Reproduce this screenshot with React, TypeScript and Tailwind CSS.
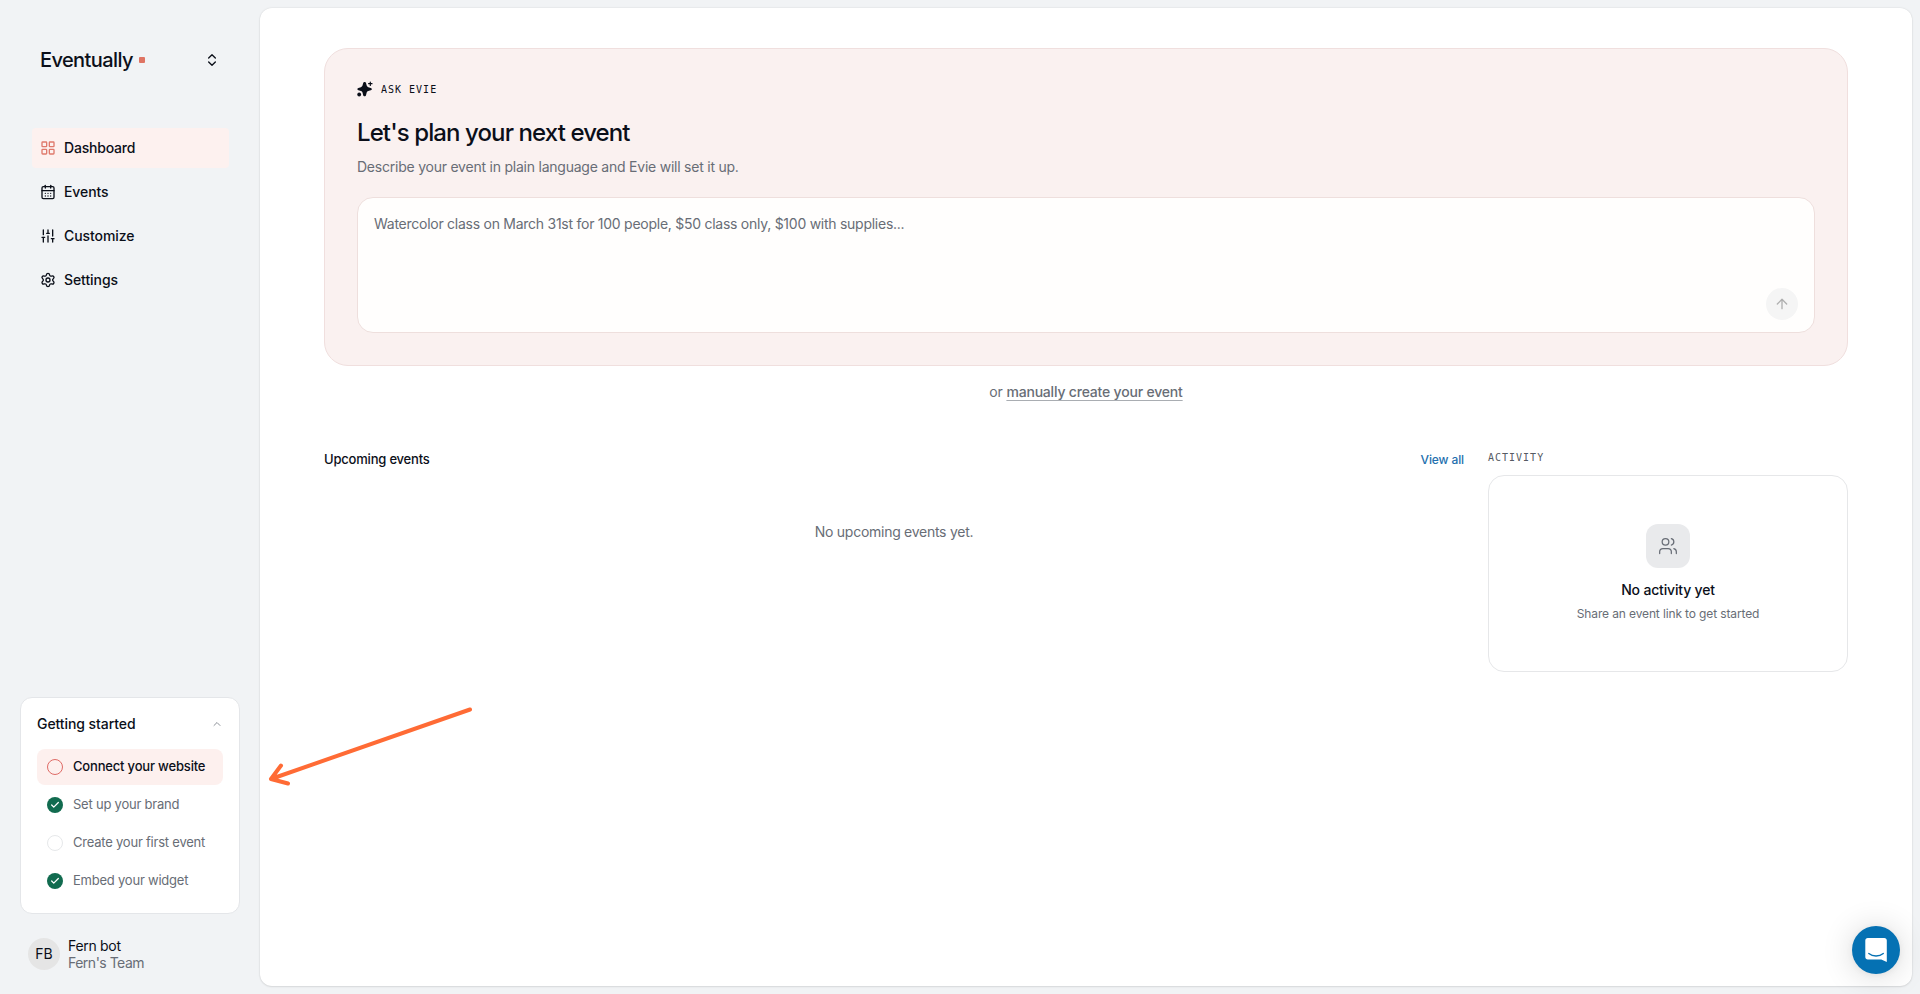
import React from "react";
import {
  ArrowUp,
  CalendarDays,
  Check,
  ChevronUp,
  ChevronsUpDown,
  LayoutGrid,
  Settings,
  SlidersVertical,
  Users,
} from "lucide-react";

const navItems = [
  { label: "Dashboard", icon: LayoutGrid, active: true },
  { label: "Events", icon: CalendarDays, active: false },
  { label: "Customize", icon: SlidersVertical, active: false },
  { label: "Settings", icon: Settings, active: false },
];

const steps = [
  { label: "Connect your website", state: "current" },
  { label: "Set up your brand", state: "done" },
  { label: "Create your first event", state: "todo" },
  { label: "Embed your widget", state: "done" },
];

function StepMark({ state }: { state: string }) {
  if (state === "done") {
    return (
      <span className="flex size-4 items-center justify-center rounded-full bg-[#116b4f] text-white">
        <Check size={10} strokeWidth={3} />
      </span>
    );
  }
  return (
    <span
      className={
        state === "current"
          ? "size-4 rounded-full border border-[#df6b66]"
          : "size-4 rounded-full border border-[#e6e8ea]"
      }
    />
  );
}

function Sparkle() {
  return (
    <svg width="16" height="16" viewBox="0 0 16 16" fill="#0b0f19">
      <path d="M7.600 1c.8 0 1.200.5 1.400 1.100l.7 2.500c.3.900.7 1.300 1.600 1.600l2.500.7c.6.200 1.100.6 1.100 1.200s-.5 1-1.100 1.200l-2.500.7c-.9.300-1.300.7-1.600 1.600L9 14.200c-.2.600-.6 1.100-1.400 1.100s-1.200-.5-1.400-1.100l-.7-2.600c-.3-.9-.7-1.300-1.600-1.600l-2.500-.7C.8 9.100.3 8.700.3 8.100s.5-1 1.100-1.200l2.500-.7c.9-.3 1.300-.7 1.600-1.600l.7-2.500C6.400 1.500 6.800 1 7.600 1z" />
      <path
        d="M13.300 1v3.400M11.600 2.700h3.400"
        stroke="#0b0f19"
        strokeWidth="1.200"
        strokeLinecap="round"
      />
      <circle cx="2.200" cy="13.500" r="1.900" />
    </svg>
  );
}

function Sidebar() {
  return (
    <aside className="flex w-[260px] shrink-0 flex-col">
      <div className="mt-10 flex h-10 items-center justify-between pr-10 pl-10">
        <div className="flex items-center gap-1.5">
          <span className="text-[20px] font-medium tracking-[-0.6px]">Eventually</span>
          <span className="size-1.5 rounded-[1px] bg-[#df7463]" />
        </div>
        <ChevronsUpDown size={16} strokeWidth={2} />
      </div>

      <nav className="mt-12 flex flex-col gap-1 pr-[31px] pl-8">
        {navItems.map(({ label, icon: Icon, active }) => (
          <a
            key={label}
            className={
              active
                ? "flex h-10 items-center gap-2 rounded-[4px] bg-[#fdf1ef] px-2 text-sm font-medium tracking-[-0.2px]"
                : "flex h-10 items-center gap-2 rounded-[4px] px-2 text-sm font-medium tracking-[-0.08px]"
            }
          >
            <Icon size={16} strokeWidth={2} className={active ? "text-[#df7a6c]" : ""} />
            {label}
          </a>
        ))}
      </nav>

      <section className="mt-auto ml-5 h-[217px] w-[220px] rounded-xl border border-[#e4e6e9] bg-white px-4 pt-4">
        <div className="flex h-5 items-center justify-between">
          <h2 className="text-sm font-medium tracking-[-0.08px]">Getting started</h2>
          <ChevronUp size={12} className="text-[#8d9299]" />
        </div>
        <ul className="mt-[15px] flex flex-col gap-0.5">
          {steps.map(({ label, state }) => (
            <li
              key={label}
              className={
                state === "current"
                  ? "flex h-9 items-center gap-2.5 rounded-lg bg-[#fdf0ee] px-2.5 text-[13px] font-medium tracking-[-0.18px]"
                  : "flex h-9 items-center gap-2.5 px-2.5 text-[13px] tracking-[-0.22px] text-[#686d76]"
              }
            >
              <StepMark state={state} />
              <span className="whitespace-nowrap">{label}</span>
            </li>
          ))}
        </ul>
      </section>

      <div className="mt-6 mb-6 flex h-8 items-center gap-2 pl-7">
        <span className="flex size-8 items-center justify-center rounded-full bg-[#e5e5e5] text-sm">
          FB
        </span>
        <div className="text-sm leading-[17px]">
          <p className="tracking-[-0.3px]">Fern bot</p>
          <p className="tracking-[-0.5px] text-[#686d76]">Fern's Team</p>
        </div>
      </div>
    </aside>
  );
}

function AskEvie() {
  return (
    <section className="h-[318px] rounded-3xl border border-[#f0dfde] bg-[#faf1f0] px-8 pt-8">
      <div className="flex h-4 items-center gap-2">
        <Sparkle />
        <span className="font-['DejaVu_Sans_Mono',monospace] text-[10px] tracking-[1px]">
          ASK EVIE
        </span>
      </div>
      <h1 className="mt-5 text-2xl leading-8 font-medium tracking-[-0.9px]">
        Let's plan your next event
      </h1>
      <p className="mt-2 text-sm leading-5 tracking-[-0.23px] text-[#686d76]">
        Describe your event in plain language and Evie will set it up.
      </p>
      <div className="mt-5 flex h-[136px] flex-col justify-between rounded-2xl border border-[#eedfdd] bg-[#fffefd] px-4 pt-4 pb-3">
        <p className="text-sm leading-5 tracking-[-0.26px] text-[#686d76]">
          Watercolor class on March 31st for 100 people, $50 class only, $100 with supplies...
        </p>
        <button className="flex size-8 items-center justify-center self-end rounded-full bg-[#f5f5f5] text-[#b0b0b0]">
          <ArrowUp size={16} />
        </button>
      </div>
    </section>
  );
}

export default function App() {
  return (
    <div className="relative flex h-[994px] w-[1920px] overflow-hidden bg-[#f1f3f5] font-['Inter',sans-serif] text-[#0b0f19]">
      <Sidebar />
      <main className="mt-2 mr-2 mb-2 flex-1 rounded-xl bg-white px-16 pt-10 shadow-[0_0_2px_rgba(0,0,0,0.12),0_1px_2px_rgba(0,0,0,0.08)]">
        <AskEvie />
        <p className="mt-4 text-center text-sm leading-5 tracking-[-0.19px] text-[#686d76]">
          or{" "}
          <a className="font-medium underline decoration-[#a9adb2] underline-offset-[3px]">
            manually create your event
          </a>
        </p>
        <div className="mt-12 grid grid-cols-[1140px_360px] gap-6">
          <section>
            <div className="flex h-5 items-center justify-between">
              <h2 className="text-[13px] font-medium tracking-[-0.2px]">Upcoming events</h2>
              <a className="text-xs font-medium tracking-[-0.12px] text-[#236fae]">View all</a>
            </div>
            <p className="mt-[52px] text-center text-sm leading-5 tracking-[-0.27px] text-[#686d76]">
              No upcoming events yet.
            </p>
          </section>
          <section>
            <h2 className="h-[25px] font-['DejaVu_Sans_Mono',monospace] text-[10px] leading-[15px] tracking-[1px] text-[#565b63]">
              ACTIVITY
            </h2>
            <div className="flex h-[197px] flex-col items-center rounded-2xl border border-[#e6e7e9] pt-12">
              <span className="flex size-11 items-center justify-center rounded-xl bg-[#e9eaec] text-[#686d76]">
                <Users size={20} strokeWidth={1.5} />
              </span>
              <h3 className="mt-3 text-sm leading-5 font-medium tracking-[-0.17px]">
                No activity yet
              </h3>
              <p className="mt-1.5 text-xs leading-4 tracking-[-0.13px] text-[#686d76]">
                Share an event link to get started
              </p>
            </div>
          </section>
        </div>
      </main>

      <svg
        className="absolute top-[700px] left-[262px]"
        width="220"
        height="92"
        fill="none"
        stroke="#ff6b35"
        strokeWidth="4"
        strokeLinecap="round"
        strokeLinejoin="round"
      >
        <path d="M208 9.500 9 79M19 65.500 9 79l17 4.500" />
      </svg>

      <button className="absolute top-[926px] left-[1852px] flex size-12 items-center justify-center rounded-full bg-[#0571b3] shadow-[0_1px_6px_rgba(0,0,0,0.06),0_2px_32px_rgba(0,0,0,0.16)]">
        <svg width="22" height="24" viewBox="0 0 22 24" fill="none">
          <path
            d="M2.800 0h16.500c1.500 0 2.500 1 2.500 2.500V24l-5.500-2.500H2.800C1.300 21.500.3 20.500.3 19V2.500C.3 1 1.300 0 2.800 0z"
            fill="white"
          />
          <path d="M3.800 15.500c4 3.300 10.500 3.300 14.500 0" stroke="#0571b3" strokeWidth="1.300" strokeLinecap="round" />
        </svg>
      </button>
    </div>
  );
}
